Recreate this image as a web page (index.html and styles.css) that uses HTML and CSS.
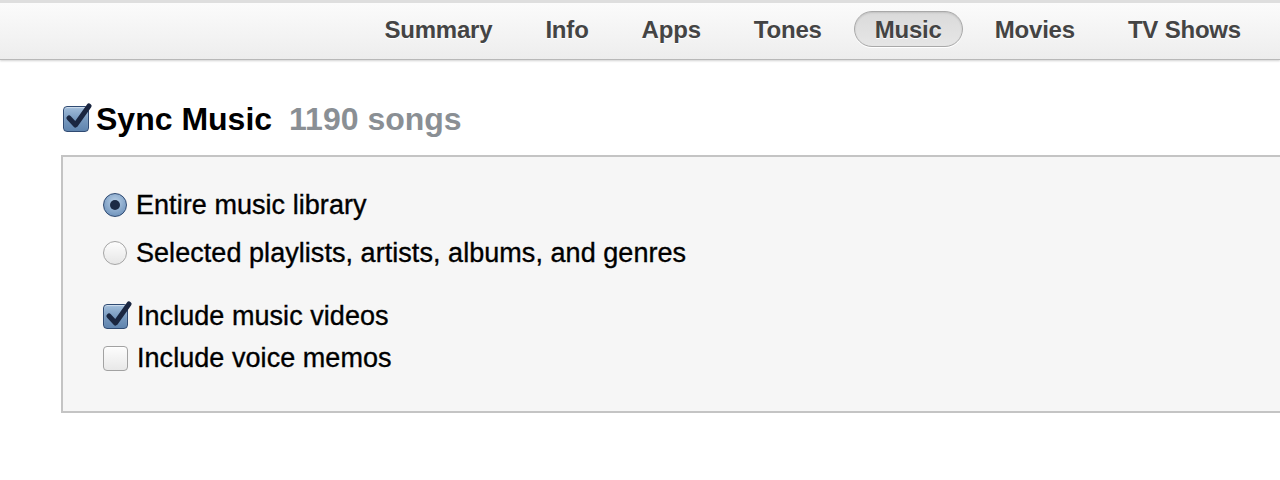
FILE: index.html
```html
<!DOCTYPE html>
<html>
<head>
<meta charset="utf-8">
<link rel="stylesheet" href="styles.css">
</head>
<body>
<header class="topbar">
  <nav class="tabs">
    <span class="tab">Summary</span>
    <span class="tab">Info</span>
    <span class="tab">Apps</span>
    <span class="tab">Tones</span>
    <span class="tab active">Music</span>
    <span class="tab">Movies</span>
    <span class="tab">TV Shows</span>
  </nav>
</header>
<main class="content">
  <div class="title-row">
    <span class="check big checked">
      <svg class="tick" viewBox="0 0 30 30"><path d="M6 15 L12.5 22 L26 3" fill="none" stroke="#1a2640" stroke-width="5" stroke-linecap="round" stroke-linejoin="round"/></svg>
    </span>
    <span class="title">Sync Music</span>
    <span class="count">1190 songs</span>
  </div>
  <section class="panel">
    <div class="group radios">
      <label class="row"><span class="radio on"><span class="dot"></span></span><span class="label">Entire music library</span></label>
      <label class="row"><span class="radio"></span><span class="label">Selected playlists, artists, albums, and genres</span></label>
    </div>
    <div class="group checks">
      <label class="row"><span class="check checked">
        <svg class="tick" viewBox="0 0 30 30"><path d="M6 15 L12.5 22 L26 3" fill="none" stroke="#1a2640" stroke-width="5" stroke-linecap="round" stroke-linejoin="round"/></svg>
      </span><span class="label">Include music videos</span></label>
      <label class="row"><span class="check"></span><span class="label">Include voice memos</span></label>
    </div>
  </section>
</main>
</body>
</html>
```

FILE: styles.css
```css
* { box-sizing: border-box; }
html, body {
  margin: 0;
  padding: 0;
  background: #ffffff;
  overflow: hidden;
  width: 1280px;
  height: 480px;
  font-family: "Liberation Sans", Arial, Helvetica, sans-serif;
}

.topbar {
  height: 60px;
  border-top: 3px solid #dedede;
  background: linear-gradient(#fbfbfb, #f3f3f3 60%, #ededed);
  border-bottom: 1px solid #b8b8b8;
  box-shadow: 0 1px 2px rgba(0,0,0,0.18);
  display: flex;
  justify-content: flex-end;
  align-items: flex-start;
  padding: 8px 18px 0 0;
}
.tabs {
  display: flex;
  gap: 11px;
}
.tab {
  height: 36px;
  line-height: 36px;
  padding: 0 20px;
  font-size: 24px;
  font-weight: bold;
  color: #444444;
  text-shadow: 0 1px 0 #ffffff;
  border: 1px solid transparent;
  border-radius: 18px;
  letter-spacing: -0.2px;
}
.tab.active {
  background: linear-gradient(#dadada, #e6e6e6);
  border-color: #a9a9a9;
  box-shadow: inset 0 1px 2px rgba(0,0,0,0.12), 0 1px 0 #ffffff;
}

.content {
  padding: 40px 0 0 61px;
}
.title-row {
  display: flex;
  align-items: center;
  height: 38px;
  padding-left: 2px;
}
.title {
  margin-left: 7px;
  font-size: 32px;
  font-weight: bold;
  color: #000000;
}
.count {
  margin-left: 17px;
  font-size: 32px;
  font-weight: bold;
  color: #8a8f94;
}

.panel {
  margin-top: 17px;
  border: 2px solid #c4c4c4;
  border-right: none;
  background: #f6f6f6;
  padding: 24px 0 32px 40px;
}
.group { display: flex; flex-direction: column; }
.radios .row { height: 48px; }
.checks { margin-top: 18px; }
.checks .row { height: 42px; }
.row {
  display: flex;
  align-items: center;
}
.label {
  margin-left: 9px;
  font-size: 27px;
  color: #000000;
  -webkit-text-stroke: 0.35px #000;
  letter-spacing: 0.05px;
}

.check {
  position: relative;
  display: inline-block;
  flex: none;
  width: 25px;
  height: 25px;
  border: 1px solid #a2a2a2;
  border-radius: 4px;
  background: linear-gradient(#fdfdfd, #e8e8e8);
  box-shadow: inset 0 1px 1px rgba(255,255,255,0.8);
}
.check.big {
  width: 26px;
  height: 26px;
}
.check.checked {
  border-color: #2f4a72;
  background: linear-gradient(#a2bedb, #7597bd 55%, #5f84ae);
  box-shadow: inset 0 1px 1px rgba(255,255,255,0.5);
}
.tick {
  position: absolute;
  left: -1px;
  top: -4px;
  width: 30px;
  height: 30px;
}

.radio {
  position: relative;
  display: inline-flex;
  align-items: center;
  justify-content: center;
  flex: none;
  width: 24px;
  height: 24px;
  border-radius: 50%;
  border: 1px solid #a5a5a5;
  background: linear-gradient(#fdfdfd, #e6e6e6);
}
.radio.on {
  border-color: #2f4a72;
  background: radial-gradient(circle at 50% 35%, #b8cfe6, #7a9cc2 70%, #5f84ae);
}
.dot {
  width: 10px;
  height: 10px;
  border-radius: 50%;
  background: #1c2a44;
}
```
